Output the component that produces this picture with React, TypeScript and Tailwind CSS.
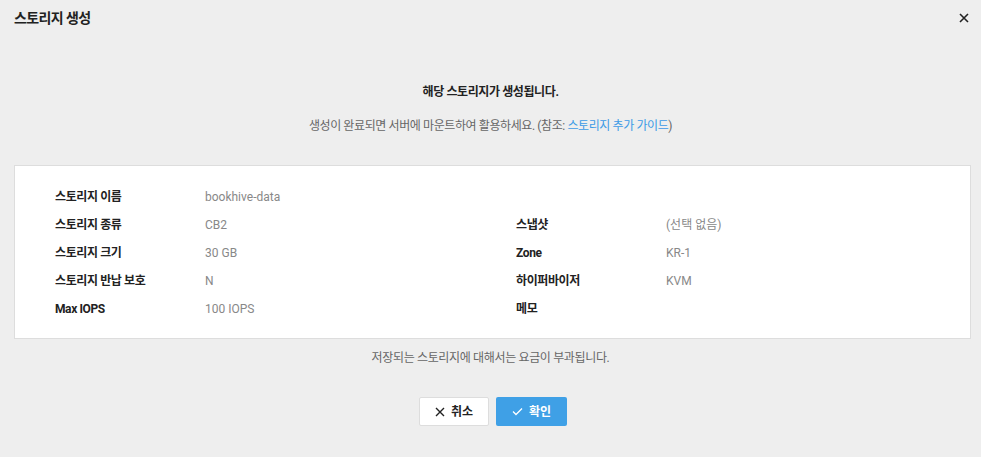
import React from "react";

const font = { fontFamily: "Roboto, 'Noto Sans CJK KR', 'Noto Sans', sans-serif" };

function Row({ label, value }: { label: string; value?: string }) {
  return (
    <div className="flex h-[28px] items-center">
      <div className="w-[150px] text-[12px] font-bold text-[#222] tracking-[-0.4px]">{label}</div>
      <div className="text-[12px] text-[#888]">{value}</div>
    </div>
  );
}

export default function App() {
  return (
    <div className="w-[981px] h-[457px] bg-[#eeeeee] flex flex-col" style={font}>
      <div className="flex h-[36px] items-center justify-between pl-[14px] pr-[8px]">
        <div className="text-[14px] font-bold text-[#222] tracking-[-0.6px]">스토리지 생성</div>
        <svg width="12" height="12" viewBox="0 0 12 12" className="mr-[3px]">
          <path d="M2 2 L10 10 M10 2 L2 10" stroke="#222" strokeWidth="1.6" />
        </svg>
      </div>
      <div className="mt-[47px] text-center text-[12px] font-bold text-[#222] leading-[18px] tracking-[-0.4px]">
        해당 스토리지가 생성됩니다.
      </div>
      <div className="mt-[16px] text-center text-[12px] text-[#666] leading-[18px] tracking-[-0.4px]">
        생성이 완료되면 서버에 마운트하여 활용하세요. (참조: <span className="text-[#3d9be6]">스토리지 추가 가이드</span>)
      </div>
      <div className="mt-[30px] ml-[14px] mr-[10px] h-[174px] bg-white border border-[#dddddd] pl-[40px] pt-[17px] flex">
        <div className="w-[461px] flex flex-col">
          <Row label="스토리지 이름" value="bookhive-data" />
          <Row label="스토리지 종류" value="CB2" />
          <Row label="스토리지 크기" value="30 GB" />
          <Row label="스토리지 반납 보호" value="N" />
          <Row label="Max IOPS" value="100 IOPS" />
        </div>
        <div className="flex flex-col pt-[28px]">
          <Row label="스냅샷" value="(선택 없음)" />
          <Row label="Zone" value="KR-1" />
          <Row label="하이퍼바이저" value="KVM" />
          <Row label="메모" value="" />
        </div>
      </div>
      <div className="mt-[10px] text-center text-[12px] text-[#666] leading-[18px] tracking-[-0.35px]">
        저장되는 스토리지에 대해서는 요금이 부과됩니다.
      </div>
      <div className="mt-[30px] flex justify-center gap-[7px] pl-[5px]">
        <button className="w-[70px] h-[29px] bg-white border border-[#dddddd] rounded-[2px] flex items-center justify-center gap-[6px] text-[12px] font-bold text-[#222]">
          <svg width="10" height="10" viewBox="0 0 10 10">
            <path d="M1 1 L9 9 M9 1 L1 9" stroke="#222" strokeWidth="1.4" />
          </svg>
          취소
        </button>
        <button className="w-[71px] h-[29px] bg-[#3fa0e6] rounded-[2px] flex items-center justify-center gap-[6px] text-[12px] font-bold text-white">
          <svg width="11" height="9" viewBox="0 0 11 9">
            <path d="M1 4.5 L4 7.5 L10 1.5" stroke="#fff" strokeWidth="1.3" fill="none" />
          </svg>
          확인
        </button>
      </div>
    </div>
  );
}
